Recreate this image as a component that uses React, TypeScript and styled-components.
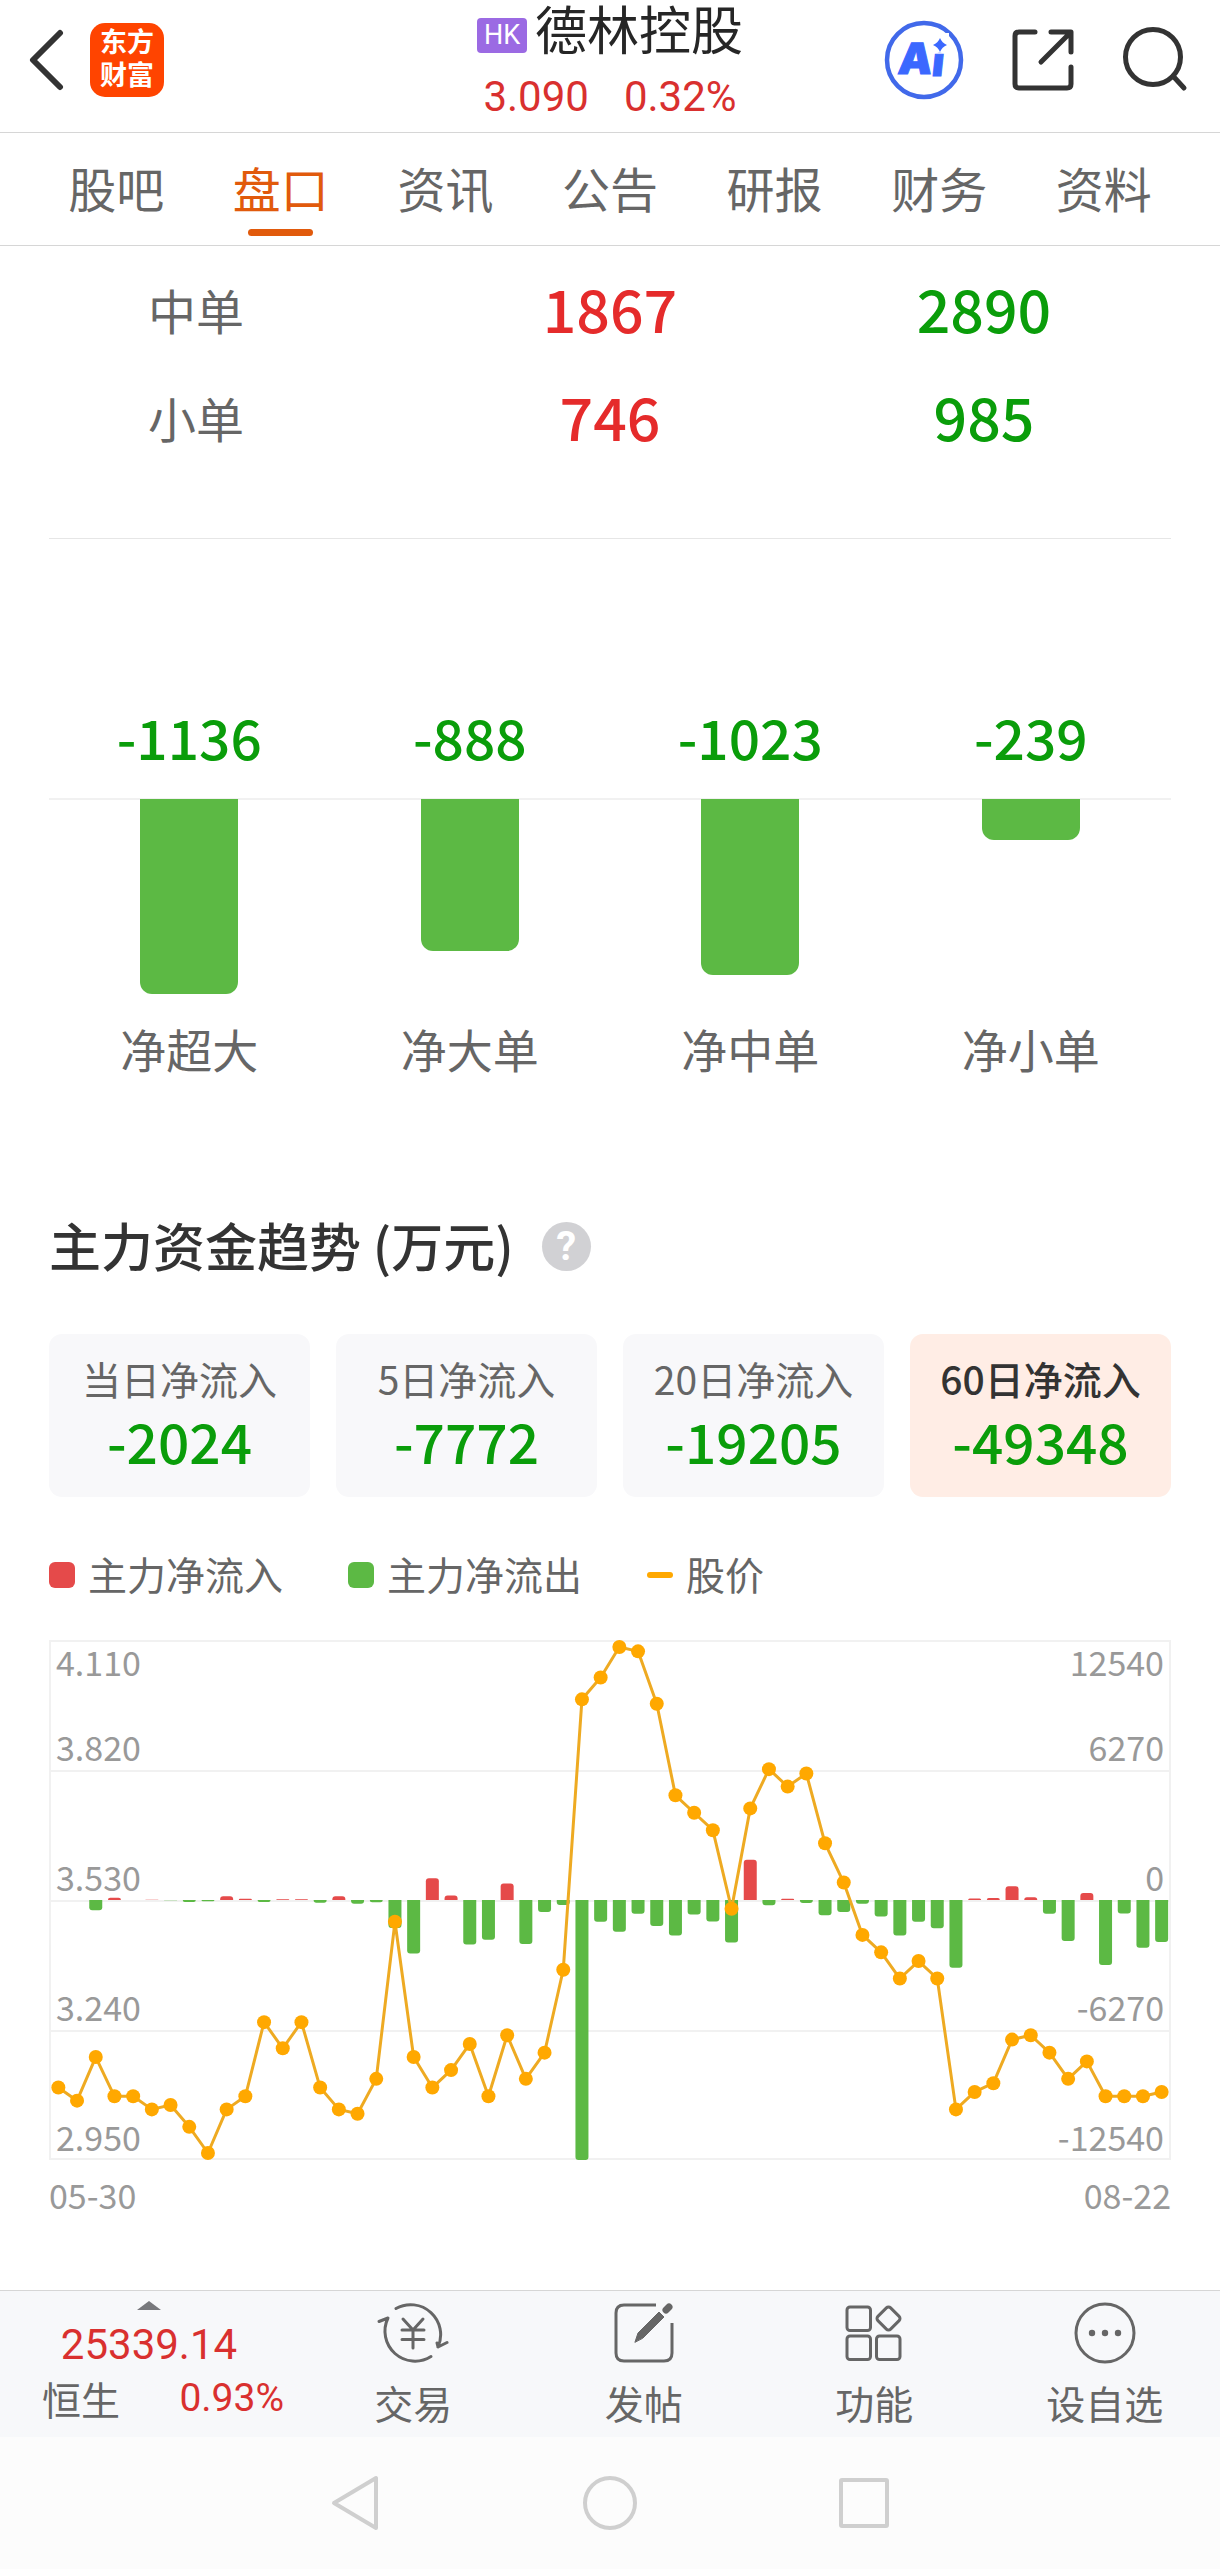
import React from 'react';
import styled, { createGlobalStyle } from 'styled-components';

const CJK = '"Noto Sans CJK SC", "Noto Sans", sans-serif';
const NUM = 'Roboto, "Noto Sans CJK SC", sans-serif';
const INK = '#333333';
const GREY = '#666666';
const RED = '#d9302f';
const GREEN = '#0a9d0a';
const BAR_GREEN = '#5cb944';
const BAR_RED = '#e54a4a';
const ORANGE = '#ffa800';

const GlobalStyle = createGlobalStyle`
  * { box-sizing: border-box; }
  body { margin: 0; background: #ffffff; }
  button { border: 0; padding: 0; background: none; font: inherit; color: inherit; cursor: pointer; }
  svg { display: block; }
`;

const Page = styled.div`
  min-height: 100vh;
  display: flex;
  flex-direction: column;
  font-family: ${CJK};
  color: ${GREY};
`;

/* ---------- header ---------- */
const Header = styled.header`
  display: grid;
  grid-template-columns: 1fr auto 1fr;
  height: 133px;
  border-bottom: 1px solid #d6d6d6;
`;

const HeaderSide = styled.div<{ $end?: boolean }>`
  display: flex;
  align-items: center;
  justify-content: ${p => (p.$end ? 'flex-end' : 'flex-start')};
  gap: ${p => (p.$end ? 47 : 26)}px;
  height: 120px;
  padding: 0 32px 0 28px;
`;

const Logo = styled.a`
  display: grid;
  place-content: center;
  width: 74px;
  height: 74px;
  border-radius: 15px;
  background: #ff4400;
  color: #ffffff;
  font-family: ${NUM};
  font-size: 27px;
  font-weight: 700;
  line-height: 33px;
  text-decoration: none;
  text-align: center;
`;

const LogoLine = styled.span`
  display: block;
`;

const Stock = styled.div`
  display: flex;
  flex-direction: column;
  align-items: center;
`;

const StockName = styled.h1`
  display: flex;
  align-items: center;
  gap: 8px;
  margin: 0;
  color: #262626;
  font-family: ${NUM};
  font-size: 52px;
  font-weight: 400;
  line-height: 66px;
`;

const Market = styled.span`
  margin-top: 4px;
  padding: 0 7px;
  border-radius: 4px;
  background: #9b6ae3;
  color: #ffffff;
  font-family: ${NUM};
  font-size: 27px;
  line-height: 35px;
`;

const Quote = styled.div`
  display: flex;
  gap: 35px;
  color: ${RED};
  font-family: ${NUM};
  font-size: 42px;
  line-height: 62px;
`;

/* ---------- tabs ---------- */
const Tabs = styled.nav`
  display: flex;
  height: 113px;
  padding: 0 34px;
  border-bottom: 1px solid #d6d6d6;
`;

const Tab = styled.button<{ $active?: boolean }>`
  flex: 1;
  display: flex;
  flex-direction: column;
  align-items: center;
  justify-content: flex-start;
  gap: 12px;
  padding-top: 24px;
  color: ${p => (p.$active ? '#e15a0c' : GREY)};
  font-size: 48px;
  line-height: 60px;

  &::after {
    content: '';
    width: 65px;
    height: 7px;
    border-radius: 4px;
    background: ${p => (p.$active ? '#e15a0c' : 'transparent')};
  }
`;

/* ---------- content ---------- */
const Main = styled.main`
  flex: 1;
  padding: 8px 49px 69px;
`;

const Orders = styled.table`
  width: 100%;
  table-layout: fixed;
  border-collapse: collapse;
  text-align: center;
`;

const OrderName = styled.th`
  height: 108px;
  padding: 2px 80px 0 0;
  font-size: 48px;
  font-weight: 400;
`;

const OrderValue = styled.td<{ $color: string }>`
  padding: 0;
  color: ${p => p.$color};
  font-size: 59px;
  font-weight: 500;
  line-height: 108px;
`;

const Divider = styled.hr`
  height: 1px;
  margin: 68px 0 167px;
  border: 0;
  background: #e6e6e6;
`;

const NetChart = styled.ul`
  display: grid;
  grid-template-columns: repeat(4, 1fr);
  margin: 0;
  padding: 0;
  list-style: none;
  text-align: center;
`;

const NetValue = styled.div`
  color: ${GREEN};
  font-size: 55px;
  font-weight: 500;
  line-height: 60px;
`;

const NetTrack = styled.div`
  display: flex;
  justify-content: center;
  align-items: flex-start;
  height: 220px;
  margin-top: 32px;
  background: linear-gradient(#f1f1f1 2px, transparent 2px);
`;

const NetBar = styled.div`
  width: 98px;
  margin-top: 1px;
  border-radius: 0 0 12px 12px;
  background: ${BAR_GREEN};
`;

const NetLabel = styled.div`
  font-size: 46px;
  line-height: 60px;
`;

const TitleRow = styled.div`
  display: flex;
  align-items: center;
  gap: 28px;
  margin-top: 137px;
`;

const Title = styled.h2`
  margin: 0;
  color: ${INK};
  font-size: 52px;
  font-weight: 500;
  line-height: 60px;
`;

const Help = styled.button`
  width: 49px;
  height: 49px;
  margin-top: 2px;
  border-radius: 50%;
  background: #d1d1d4;
  color: #ffffff;
  font-family: ${NUM};
  font-size: 40px;
  font-weight: 700;
  line-height: 49px;
`;

const Periods = styled.div`
  display: grid;
  grid-template-columns: repeat(4, 1fr);
  gap: 26px;
  margin-top: 59px;
`;

const Period = styled.button<{ $active?: boolean }>`
  display: flex;
  flex-direction: column;
  align-items: center;
  gap: 5px;
  padding: 19px 0 25px;
  border-radius: 13px;
  background: ${p => (p.$active ? '#ffede5' : '#f8f8fa')};
  color: ${p => (p.$active ? INK : GREY)};
  font-size: 39px;
  font-weight: ${p => (p.$active ? 500 : 400)};
  line-height: 50px;
`;

const PeriodValue = styled.span`
  color: ${GREEN};
  font-size: 55px;
  font-weight: 500;
  line-height: 64px;
`;

const Legend = styled.ul`
  display: flex;
  gap: 65px;
  margin: 51px 0 42px;
  padding: 0;
  list-style: none;
  font-size: 39px;
  line-height: 50px;
`;

const LegendItem = styled.li<{ $color: string; $line?: boolean }>`
  display: flex;
  align-items: center;
  gap: 13px;

  &::before {
    content: '';
    width: 26px;
    height: ${p => (p.$line ? 6 : 26)}px;
    margin-top: 4px;
    border-radius: ${p => (p.$line ? 3 : 6)}px;
    background: ${p => p.$color};
  }
`;

const ChartSvg = styled.svg`
  width: 100%;
  height: auto;
  overflow: visible;
  fill: #999999;
  font-size: 34px;
`;

const Dates = styled.div`
  display: flex;
  justify-content: space-between;
  margin-top: 10px;
  color: #999999;
  font-size: 34px;
  line-height: 50px;
`;

/* ---------- bottom ---------- */
const Toolbar = styled.footer`
  display: flex;
  height: 147px;
  border-top: 1px solid #d6d6d6;
  background: #f7f8fa;
`;

const IndexBox = styled.button`
  display: flex;
  flex-direction: column;
  align-items: center;
  justify-content: flex-start;
  width: 298px;
  padding-top: 10px;
`;

const IndexValue = styled.span`
  margin-top: 8px;
  color: ${RED};
  font-family: ${NUM};
  font-size: 42px;
  line-height: 54px;
`;

const IndexRow = styled.span`
  display: flex;
  justify-content: space-between;
  width: 100%;
  padding: 0 14px 0 42px;
  font-size: 39px;
  line-height: 52px;
`;

const IndexChange = styled.span`
  color: ${RED};
  font-family: ${NUM};
`;

const Actions = styled.nav`
  flex: 1;
  display: grid;
  grid-template-columns: repeat(4, 1fr);
`;

const Action = styled.button`
  display: flex;
  flex-direction: column;
  align-items: center;
  justify-content: flex-start;
  padding-top: 8px;
  gap: 9px;
  font-size: 39px;
  line-height: 52px;
`;

const SystemNav = styled.nav`
  display: flex;
  align-items: center;
  justify-content: center;
  gap: 192px;
  height: 132px;
  background: #fcfcfc;
`;

/* ---------- data ---------- */
const tabs = ['股吧', '盘口', '资讯', '公告', '研报', '财务', '资料'];

const orders = [
  { name: '中单', buy: 1867, sell: 2890 },
  { name: '小单', buy: 746, sell: 985 },
];

const nets = [
  { name: '净超大', value: -1136 },
  { name: '净大单', value: -888 },
  { name: '净中单', value: -1023 },
  { name: '净小单', value: -239 },
];

const periods = [
  { name: '当日净流入', value: -2024 },
  { name: '5日净流入', value: -7772 },
  { name: '20日净流入', value: -19205 },
  { name: '60日净流入', value: -49348 },
];

const prices = [
  3.1, 3.07, 3.17, 3.08, 3.08, 3.05, 3.06, 3.01, 2.95, 3.05, 3.08, 3.25, 3.19, 3.25, 3.1,
  3.05, 3.04, 3.12, 3.48, 3.17, 3.1, 3.14, 3.2, 3.08, 3.22, 3.12, 3.18, 3.37, 3.99, 4.04,
  4.11, 4.1, 3.98, 3.77, 3.73, 3.69, 3.51, 3.74, 3.83, 3.79, 3.82, 3.66, 3.57, 3.45, 3.41,
  3.35, 3.39, 3.35, 3.05, 3.09, 3.11, 3.21, 3.22, 3.18, 3.12, 3.16, 3.08, 3.08, 3.08, 3.09,
];

const flows = [
  0, 0, -499, 111, 0, 12, -14, -92, -55, 185, 55, -92, 37, 37, -129,
  185, -185, -111, -1348, -2586, 1053, 222, -2142, -1921, 794, -2124, -573, -240, -12540, -1053,
  -1533, -665, -1256, -1718, -702, -1034, -2050, 1939, -259, 55, -148, -739, -573, -185, -794,
  -1718, -1053, -1367, -3269, 74, 92, 665, 129, -665, -1976, 332, -3140, -646, -2309, -2024,
];

const priceTicks = ['4.110', '3.820', '3.530', '3.240', '2.950'];
const flowTicks = ['12540', '6270', '0', '-6270', '-12540'];

function TrendChart() {
  const W = 1122;
  const H = 520;
  const inset = 7;
  const mid = H / 2;
  const slot = W / prices.length;
  const x = (i: number) => slot * (i + 0.5);
  const y = (p: number) => inset + ((4.11 - p) / 1.16) * (H - inset * 2);
  const tickY = (i: number) => (i === 0 ? 36 : i * 130 - 9);
  return (
    <ChartSvg viewBox={`0 0 ${W} ${H}`} role="img" aria-label="主力资金趋势">
      <rect x="1" y="1" width={W - 2} height={H - 2} fill="none" stroke="#f1f1f1" strokeWidth="2" />
      {[130, 260, 390].map(v => (
        <line key={v} x1="0" x2={W} y1={v + 1} y2={v + 1} stroke="#f1f1f1" strokeWidth="2" />
      ))}
      {flows.map((f, i) => {
        const h = (Math.abs(f) / 12540) * mid;
        const r = Math.min(3, h);
        const d = f < 0 ? 1 : -1;
        const l = x(i) - 6.5;
        return (
          <path
            key={i}
            fill={f < 0 ? BAR_GREEN : BAR_RED}
            d={`M${l} ${mid}V${mid + d * (h - r)}q0 ${d * r} ${r} ${d * r}h${13 - 2 * r}q${r} 0 ${r} ${-d * r}V${mid}z`}
          />
        );
      })}
      {priceTicks.map((t, i) => (
        <text key={t} x="7" y={tickY(i)}>{t}</text>
      ))}
      {flowTicks.map((t, i) => (
        <text key={t} x={W - 7} y={tickY(i)} textAnchor="end">{t}</text>
      ))}
      <polyline
        points={prices.map((p, i) => `${x(i)},${y(p)}`).join(' ')}
        fill="none"
        stroke="#eeaa22"
        strokeWidth="3"
        strokeLinejoin="round"
      />
      {prices.map((p, i) => (
        <circle key={i} cx={x(i)} cy={y(p)} r="7" fill={ORANGE} />
      ))}
    </ChartSvg>
  );
}

/* ---------- icons ---------- */
const stroke = (color: string, width: number) => ({
  fill: 'none',
  stroke: color,
  strokeWidth: width,
  strokeLinecap: 'round' as const,
  strokeLinejoin: 'round' as const,
});

const BackIcon = () => (
  <svg width="36" height="62" viewBox="0 0 36 62" {...stroke(INK, 6)}>
    <path d="M32 4L5 31L32 58" />
  </svg>
);

const AiIcon = () => (
  <svg width="80" height="80" viewBox="0 0 80 80">
    <circle cx="40" cy="40" r="37" fill="none" stroke="#4169ea" strokeWidth="4.5" />
    <g fill="#3b68ff" fontFamily="Inter, sans-serif" fontWeight="900">
      <text fontSize="43" textAnchor="middle" transform="translate(30 54) skewX(-6)" stroke="#3b68ff" strokeWidth="1">A</text>
      <text fontSize="40" textAnchor="middle" transform="translate(53 56) skewX(-6)" stroke="#3b68ff" strokeWidth="1">i</text>
    </g>
    <path d="M46 13h19v19.500h-19z" fill="#ffffff" />
    <path d="M56 18q2 5 7 7q-5 2-7 7q-2-5-7-7q5-2 7-7z" fill="#3b68ff" />
  </svg>
);

const ShareIcon = () => (
  <svg width="64" height="64" viewBox="0 0 64 64" {...stroke(INK, 5)}>
    <path d="M24 4H8Q4 4 4 8V56Q4 60 8 60H56Q60 60 60 56V39" />
    <path d="M40 4H60V24M59 5L30 34" />
  </svg>
);

const SearchIcon = () => (
  <svg width="66" height="66" viewBox="0 0 66 66" {...stroke(INK, 5)}>
    <circle cx="31" cy="30" r="27.5" />
    <path d="M51 49L62 61" />
  </svg>
);

const TradeIcon = () => (
  <svg width="72" height="68" viewBox="0 0 72 68" {...stroke(GREY, 3)}>
    <path d="M19 9.500A30 30 0 0 1 61 48L70 43.500M61 48L60 44" />
    <path d="M54 57.500A30 30 0 0 1 11 19L2 22.500" />
    <path d="M26 20L36 31L46 20M36 31V49M25 31H47M25 40.500H47" />
  </svg>
);

const PostIcon = () => (
  <svg width="72" height="68" viewBox="0 0 72 68" {...stroke(GREY, 3)}>
    <path d="M48 6H16Q8 6 8 14V54Q8 62 16 62H56Q64 62 64 54V24" strokeLinecap="butt" />
    <path d="M27 43L30 34L51 13L56 18L35 39z" fill={GREY} strokeWidth="1" />
    <path d="M58 11L61 8" strokeWidth="7" />
  </svg>
);

const AppsIcon = () => (
  <svg width="72" height="68" viewBox="0 0 72 68" {...stroke(GREY, 3)}>
    <rect x="9" y="8" width="23.500" height="23.500" rx="3" />
    <rect x="9" y="37" width="23.500" height="23.500" rx="3" />
    <rect x="38.500" y="37" width="23.500" height="23.500" rx="3" />
    <rect x="41.500" y="10.500" width="18" height="18" rx="3" transform="rotate(45 50.500 19.500)" />
  </svg>
);

const MoreIcon = () => (
  <svg width="72" height="68" viewBox="0 0 72 68" {...stroke(GREY, 3)}>
    <circle cx="36" cy="34" r="29" />
    {[23, 36, 49].map(cx => (
      <circle key={cx} cx={cx} cy="34" r="3.200" fill={GREY} stroke="none" />
    ))}
  </svg>
);

const actions = [
  { name: '交易', Icon: TradeIcon },
  { name: '发帖', Icon: PostIcon },
  { name: '功能', Icon: AppsIcon },
  { name: '设自选', Icon: MoreIcon },
];

export default function App() {
  return (
    <Page>
      <GlobalStyle />
      <Header>
        <HeaderSide>
          <button aria-label="返回"><BackIcon /></button>
          <Logo href="#home">
            <LogoLine>东方</LogoLine>
            <LogoLine>财富</LogoLine>
          </Logo>
        </HeaderSide>
        <Stock>
          <StockName><Market>HK</Market>德林控股</StockName>
          <Quote><span>3.090</span><span>0.32%</span></Quote>
        </Stock>
        <HeaderSide $end>
          <button aria-label="智能助手"><AiIcon /></button>
          <button aria-label="分享"><ShareIcon /></button>
          <button aria-label="搜索"><SearchIcon /></button>
        </HeaderSide>
      </Header>

      <Tabs>
        {tabs.map(t => (
          <Tab key={t} $active={t === '盘口'}>{t}</Tab>
        ))}
      </Tabs>

      <Main>
        <Orders>
          <tbody>
            {orders.map(o => (
              <tr key={o.name}>
                <OrderName scope="row">{o.name}</OrderName>
                <OrderValue $color="#e52b2b">{o.buy}</OrderValue>
                <OrderValue $color={GREEN}>{o.sell}</OrderValue>
              </tr>
            ))}
          </tbody>
        </Orders>

        <Divider />

        <NetChart>
          {nets.map(n => (
            <li key={n.name}>
              <NetValue>{n.value}</NetValue>
              <NetTrack>
                <NetBar style={{ height: Math.round((Math.abs(n.value) / 1136) * 195) }} />
              </NetTrack>
              <NetLabel>{n.name}</NetLabel>
            </li>
          ))}
        </NetChart>

        <TitleRow>
          <Title>主力资金趋势 (万元)</Title>
          <Help aria-label="说明">?</Help>
        </TitleRow>

        <Periods>
          {periods.map((p, i) => (
            <Period key={p.name} $active={i === 3}>
              {p.name}
              <PeriodValue>{p.value}</PeriodValue>
            </Period>
          ))}
        </Periods>

        <Legend>
          <LegendItem $color={BAR_RED}>主力净流入</LegendItem>
          <LegendItem $color={BAR_GREEN}>主力净流出</LegendItem>
          <LegendItem $color={ORANGE} $line>股价</LegendItem>
        </Legend>

        <TrendChart />
        <Dates><span>05-30</span><span>08-22</span></Dates>
      </Main>

      <Toolbar>
        <IndexBox>
          <svg width="24" height="9" viewBox="0 0 24 9"><path d="M12 0L24 9H0z" fill="#77787c" /></svg>
          <IndexValue>25339.14</IndexValue>
          <IndexRow>恒生<IndexChange>0.93%</IndexChange></IndexRow>
        </IndexBox>
        <Actions>
          {actions.map(({ name, Icon }) => (
            <Action key={name}><Icon />{name}</Action>
          ))}
        </Actions>
      </Toolbar>

      <SystemNav>
        <button aria-label="后退">
          <svg width="62" height="62" viewBox="0 0 62 62" {...stroke('#cfcfcf', 4)}><path d="M51 6V56L9 31z" /></svg>
        </button>
        <button aria-label="主页">
          <svg width="62" height="62" viewBox="0 0 62 62" {...stroke('#cfcfcf', 4)}><circle cx="31" cy="31" r="25" /></svg>
        </button>
        <button aria-label="最近任务">
          <svg width="62" height="62" viewBox="0 0 62 62" {...stroke('#cfcfcf', 4)}><rect x="8" y="8" width="46" height="46" rx="1" /></svg>
        </button>
      </SystemNav>
    </Page>
  );
}
